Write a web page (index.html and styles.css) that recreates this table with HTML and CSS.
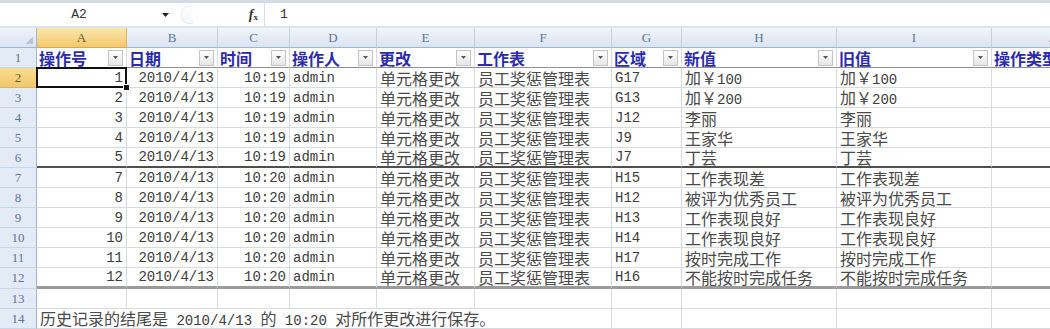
FILE: index.html
```html
<!DOCTYPE html>
<html lang="zh-CN">
<head>
<meta charset="utf-8">
<title>Excel 历史记录</title>
<link rel="stylesheet" href="styles.css">
</head>
<body>
<div class="fbar">
  <div class="namebox"><span class="nb-text">A2</span><span class="nb-arrow"><svg width="7" height="4" viewBox="0 0 7 4"><path d="M0 0H7L3.5 4Z" fill="#222"/></svg></span></div>
  <div class="mid"><span class="grip"></span><span class="fx"><i>f</i><sub>x</sub></span></div>
  <div class="formula">1</div>
</div>
<table class="sheet">
  <colgroup>
    <col class="w-rh"><col class="w-a"><col class="w-b"><col class="w-c"><col class="w-d"><col class="w-e"><col class="w-f"><col class="w-g"><col class="w-h"><col class="w-i"><col class="w-j">
  </colgroup>
  <thead>
    <tr class="colrow">
      <td class="corner"></td><td class="colh sel">A</td><td class="colh">B</td><td class="colh">C</td><td class="colh">D</td><td class="colh">E</td><td class="colh">F</td><td class="colh">G</td><td class="colh">H</td><td class="colh">I</td><td class="colh">J</td>
    </tr>
  </thead>
  <tbody>
    <tr class="hdrow">
      <td class="rh">1</td>
      <td class="hd"><div class="hw"><span>操作号</span><span class="dd"><svg width="5" height="3" viewBox="0 0 5 3"><path d="M0 0H5L2.5 3Z" fill="#555"/></svg></span></div></td>
      <td class="hd"><div class="hw"><span>日期</span><span class="dd"><svg width="5" height="3" viewBox="0 0 5 3"><path d="M0 0H5L2.5 3Z" fill="#555"/></svg></span></div></td>
      <td class="hd"><div class="hw"><span>时间</span><span class="dd"><svg width="5" height="3" viewBox="0 0 5 3"><path d="M0 0H5L2.5 3Z" fill="#555"/></svg></span></div></td>
      <td class="hd"><div class="hw"><span>操作人</span><span class="dd"><svg width="5" height="3" viewBox="0 0 5 3"><path d="M0 0H5L2.5 3Z" fill="#555"/></svg></span></div></td>
      <td class="hd"><div class="hw"><span>更改</span><span class="dd"><svg width="5" height="3" viewBox="0 0 5 3"><path d="M0 0H5L2.5 3Z" fill="#555"/></svg></span></div></td>
      <td class="hd"><div class="hw"><span>工作表</span><span class="dd"><svg width="5" height="3" viewBox="0 0 5 3"><path d="M0 0H5L2.5 3Z" fill="#555"/></svg></span></div></td>
      <td class="hd"><div class="hw"><span>区域</span><span class="dd"><svg width="5" height="3" viewBox="0 0 5 3"><path d="M0 0H5L2.5 3Z" fill="#555"/></svg></span></div></td>
      <td class="hd"><div class="hw"><span>新值</span><span class="dd"><svg width="5" height="3" viewBox="0 0 5 3"><path d="M0 0H5L2.5 3Z" fill="#555"/></svg></span></div></td>
      <td class="hd"><div class="hw"><span>旧值</span><span class="dd"><svg width="5" height="3" viewBox="0 0 5 3"><path d="M0 0H5L2.5 3Z" fill="#555"/></svg></span></div></td>
      <td class="hd"><div class="hw"><span>操作类型</span></div></td>
    </tr>
    <tr>
      <td class="rh sel">2</td><td class="r cur">1</td><td class="r">2010/4/13</td><td class="r">10:19</td><td>admin</td><td class="z">单元格更改</td><td class="z">员工奖惩管理表</td><td>G17</td><td class="z">加￥<span class="m">100</span></td><td class="z">加￥<span class="m">100</span></td><td></td>
    </tr>
    <tr>
      <td class="rh">3</td><td class="r">2</td><td class="r">2010/4/13</td><td class="r">10:19</td><td>admin</td><td class="z">单元格更改</td><td class="z">员工奖惩管理表</td><td>G13</td><td class="z">加￥<span class="m">200</span></td><td class="z">加￥<span class="m">200</span></td><td></td>
    </tr>
    <tr>
      <td class="rh">4</td><td class="r">3</td><td class="r">2010/4/13</td><td class="r">10:19</td><td>admin</td><td class="z">单元格更改</td><td class="z">员工奖惩管理表</td><td>J12</td><td class="z">李丽</td><td class="z">李丽</td><td></td>
    </tr>
    <tr>
      <td class="rh">5</td><td class="r">4</td><td class="r">2010/4/13</td><td class="r">10:19</td><td>admin</td><td class="z">单元格更改</td><td class="z">员工奖惩管理表</td><td>J9</td><td class="z">王家华</td><td class="z">王家华</td><td></td>
    </tr>
    <tr class="b1">
      <td class="rh">6</td><td class="r">5</td><td class="r">2010/4/13</td><td class="r">10:19</td><td>admin</td><td class="z">单元格更改</td><td class="z">员工奖惩管理表</td><td>J7</td><td class="z">丁芸</td><td class="z">丁芸</td><td></td>
    </tr>
    <tr>
      <td class="rh">7</td><td class="r">7</td><td class="r">2010/4/13</td><td class="r">10:20</td><td>admin</td><td class="z">单元格更改</td><td class="z">员工奖惩管理表</td><td>H15</td><td class="z">工作表现差</td><td class="z">工作表现差</td><td></td>
    </tr>
    <tr>
      <td class="rh">8</td><td class="r">8</td><td class="r">2010/4/13</td><td class="r">10:20</td><td>admin</td><td class="z">单元格更改</td><td class="z">员工奖惩管理表</td><td>H12</td><td class="z">被评为优秀员工</td><td class="z">被评为优秀员工</td><td></td>
    </tr>
    <tr>
      <td class="rh">9</td><td class="r">9</td><td class="r">2010/4/13</td><td class="r">10:20</td><td>admin</td><td class="z">单元格更改</td><td class="z">员工奖惩管理表</td><td>H13</td><td class="z">工作表现良好</td><td class="z">工作表现良好</td><td></td>
    </tr>
    <tr>
      <td class="rh">10</td><td class="r">10</td><td class="r">2010/4/13</td><td class="r">10:20</td><td>admin</td><td class="z">单元格更改</td><td class="z">员工奖惩管理表</td><td>H14</td><td class="z">工作表现良好</td><td class="z">工作表现良好</td><td></td>
    </tr>
    <tr>
      <td class="rh">11</td><td class="r">11</td><td class="r">2010/4/13</td><td class="r">10:20</td><td>admin</td><td class="z">单元格更改</td><td class="z">员工奖惩管理表</td><td>H17</td><td class="z">按时完成工作</td><td class="z">按时完成工作</td><td></td>
    </tr>
    <tr class="b2">
      <td class="rh">12</td><td class="r">12</td><td class="r">2010/4/13</td><td class="r">10:20</td><td>admin</td><td class="z">单元格更改</td><td class="z">员工奖惩管理表</td><td>H16</td><td class="z">不能按时完成任务</td><td class="z">不能按时完成任务</td><td></td>
    </tr>
    <tr>
      <td class="rh">13</td><td></td><td></td><td></td><td></td><td></td><td></td><td></td><td></td><td></td><td></td>
    </tr>
    <tr>
      <td class="rh">14</td><td colspan="6" class="z note">历史记录的结尾是<span class="m"> 2010/4/13 </span>的<span class="m"> 10:20 </span>对所作更改进行保存。</td><td></td><td></td><td></td><td></td>
    </tr>
  </tbody>
</table>
</body>
</html>
```

FILE: styles.css
```css
html, body {
  margin: 0;
  padding: 0;
  background: #ffffff;
  overflow: hidden;
}

body {
  width: 1050px;
  height: 329px;
}

/* ---------- formula bar ---------- */
.fbar {
  display: flex;
  height: 28px;
  box-sizing: border-box;
  border-top: 3px solid #d3dbe6;
  border-bottom: 2px solid #dde4ee;
  background: #ffffff;
  font-family: "Liberation Mono", monospace;
  font-size: 13px;
  color: #333333;
}

.namebox {
  width: 178px;
  display: flex;
  align-items: center;
}

.nb-text {
  flex: 1;
  text-align: center;
  padding-right: 4px;
}

.nb-arrow {
  width: 16px;
  display: flex;
  align-items: center;
  justify-content: flex-start;
}

.mid {
  width: 86px;
  display: flex;
  align-items: center;
  border-right: 1px solid #d4dbe5;
}

.grip {
  width: 11px;
  height: 16px;
  margin-left: 3px;
  border: 1px solid #e6eaf0;
  border-right: none;
  border-radius: 8px 0 0 8px;
  background: linear-gradient(#ffffff, #f4f6f9);
}

.fx {
  margin-left: auto;
  margin-right: 6px;
  font-family: "Liberation Serif", serif;
  font-weight: bold;
  font-size: 14px;
  color: #333;
  line-height: 1;
}

.fx sub {
  font-size: 9px;
  vertical-align: -1px;
}

.formula {
  flex: 1;
  display: flex;
  align-items: center;
  padding-left: 15px;
}

/* ---------- sheet ---------- */
.sheet {
  border-collapse: separate;
  border-spacing: 0;
  table-layout: fixed;
  width: 1112px;
  font-family: "Liberation Mono", "Noto Sans CJK SC", monospace;
  font-size: 14px;
  color: #3c3c3c;
}

.w-rh { width: 37px; }
.w-a { width: 90px; }
.w-b { width: 91px; }
.w-c { width: 72px; }
.w-d { width: 87px; }
.w-e { width: 98px; }
.w-f { width: 137px; }
.w-g { width: 70px; }
.w-h { width: 155px; }
.w-i { width: 155px; }
.w-j { width: 120px; }

.sheet tr {
  height: 20px;
}

.sheet td {
  height: 20px;
  padding: 0 2px 0 3px;
  border-right: 1px solid #d7dade;
  border-bottom: 1px solid #d7dade;
  white-space: nowrap;
  vertical-align: bottom;
  line-height: 18px;
  box-sizing: border-box;
}

.sheet td.z {
  font-family: "Noto Sans CJK SC", sans-serif;
  font-size: 16px;
  line-height: 18px;
  color: #4a4a4a;
}

.m {
  font-family: "Liberation Mono", monospace;
  font-size: 14px;
  line-height: 1;
  color: #3c3c3c;
}

.sheet td.r {
  text-align: right;
  padding-right: 3px;
}

/* column header row */
.sheet td.corner {
  background: #e2eaf5;
  background-image: linear-gradient(135deg, transparent 50%, #b7c5d7 50%), linear-gradient(#eef3fa, #dbe5f1);
  background-size: 7px 7px, 100% 100%;
  background-position: right 3px bottom 3px, 0 0;
  background-repeat: no-repeat;
  border-right: 1px solid #9eb6ce;
  border-bottom: 1px solid #9eb6ce;
}

.sheet td.colh {
  text-align: center;
  vertical-align: middle;
  padding: 0;
  background: linear-gradient(#f1f5fb, #dae4f1);
  border-right: 1px solid #c2d0e1;
  border-bottom: 1px solid #9eb6ce;
  color: #60769a;
  font-family: "Liberation Serif", serif;
  font-size: 13px;
  line-height: 18px;
}

.sheet td.colh.sel {
  background: linear-gradient(#fbe6ad, #f3c96b);
  border-right-color: #e0b257;
  border-bottom-color: #dca64a;
  color: #6d5a32;
}

/* row headers */
.sheet td.rh {
  text-align: center;
  vertical-align: middle;
  padding: 0;
  background: #e3ebf6;
  border-right: 1px solid #9eb6ce;
  border-bottom: 1px solid #c9d6e6;
  color: #60769a;
  font-family: "Liberation Serif", serif;
  font-size: 13px;
  line-height: 18px;
}

.sheet td.rh.sel {
  background: linear-gradient(#f9dc93, #f2c86a);
  border-bottom-color: #e0b45a;
  color: #6d5a32;
}

/* table header row */
.sheet .hdrow td.hd {
  padding: 0 3px 0 2px;
  border-bottom: 1px solid #8f8f8f;
  vertical-align: middle;
}

.hw {
  display: flex;
  align-items: center;
  justify-content: space-between;
  height: 18px;
  font-family: "Noto Sans CJK SC", sans-serif;
  font-weight: bold;
  font-size: 16px;
  color: #2b2bab;
  line-height: 18px;
}

.dd {
  width: 13px;
  height: 14px;
  flex: none;
  display: flex;
  align-items: center;
  justify-content: center;
  border: 1px solid #c4c4c4;
  background: linear-gradient(#fdfdfd, #e6e6e6);
}

/* active cell */
.sheet td.cur {
  position: relative;
}

.sheet td.cur::after {
  content: "";
  position: absolute;
  left: -1px;
  top: -1px;
  right: -1px;
  bottom: -1px;
  border: 2px solid #111;
}

.sheet td.cur::before {
  content: "";
  position: absolute;
  right: -4px;
  bottom: -4px;
  width: 5px;
  height: 5px;
  background: #111;
  border: 1px solid #fff;
  z-index: 2;
}

/* heavy separators */
.sheet tr.b1 td:not(.rh) {
  border-bottom: 2px solid #4f4f4f;
}

.sheet tr.b2 td:not(.rh) {
  border-bottom: 3px solid #9b9b9b;
}

.sheet td.note {
  padding-left: 3px;
}
```
